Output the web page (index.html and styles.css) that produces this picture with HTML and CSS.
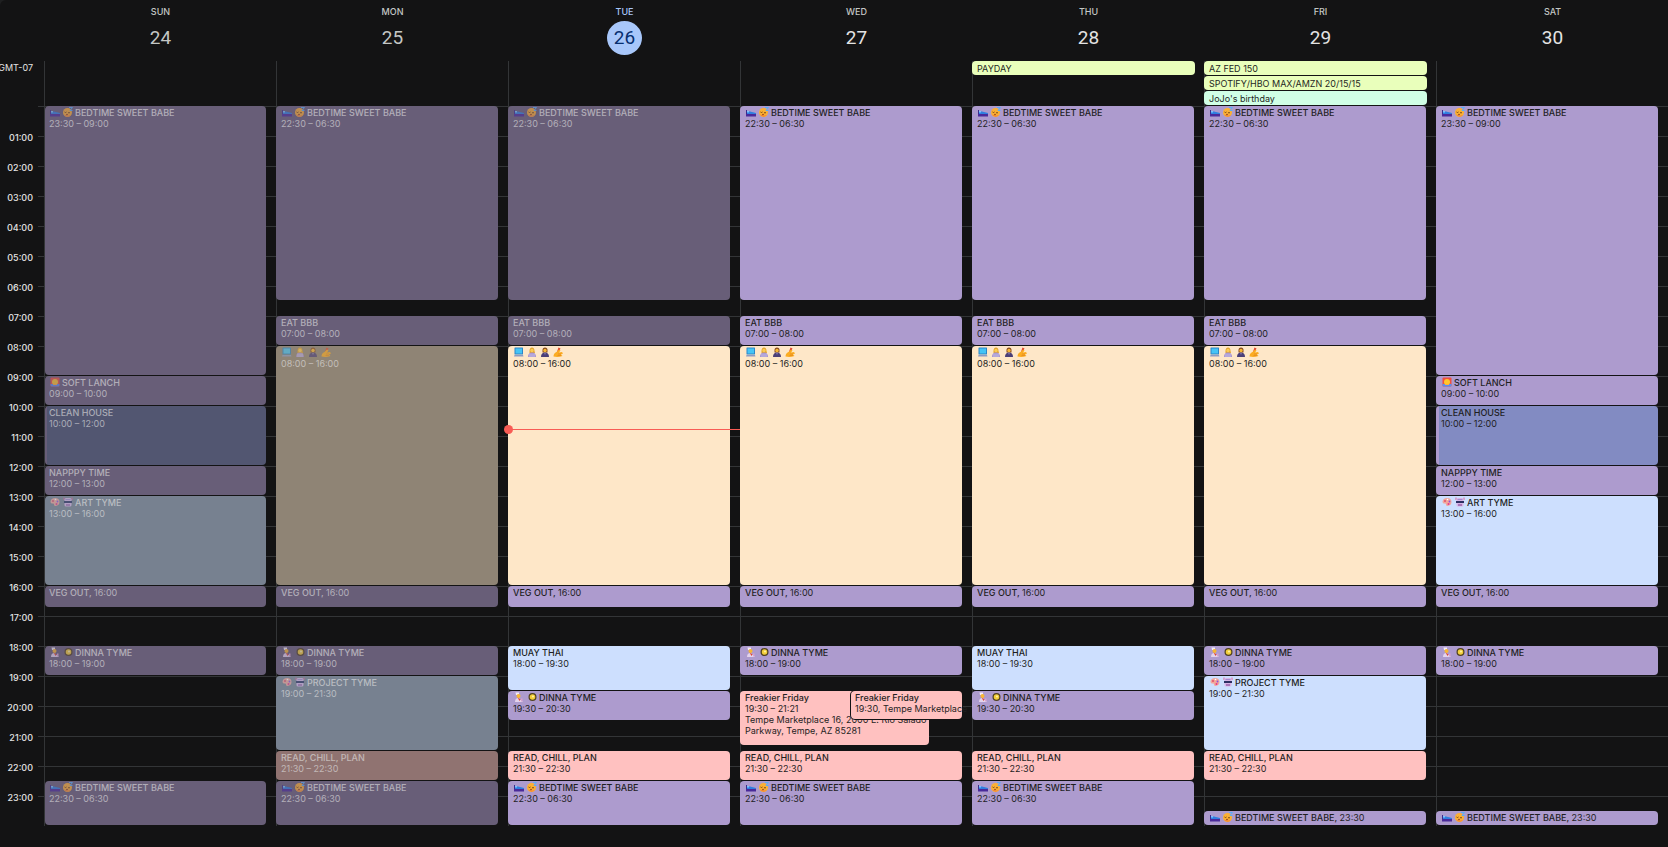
FILE: index.html
```html
<!DOCTYPE html>
<html lang="en">

<head>
    <meta charset="utf-8">
    <title>Week of 24</title>
    <link rel="stylesheet" href="styles.css">
</head>

<body>
    <svg class="sprite" aria-hidden="true">
        <symbol id="bed" viewBox="0 0 20 20">
            <path d="M0 6h2v8h-2z" fill="#3a2d8c" />
            <path d="M2 9h6l12 3v3H2z" fill="#2f7fe0" />
            <path d="M2 8h4v3H2z" fill="#7cc4ff" />
            <path d="M0 14h20v5H0z" fill="#4a2a9a" />
        </symbol>
        <symbol id="sleep" viewBox="0 0 20 20">
            <circle cx="9" cy="11" r="9" fill="#fbb034" />
            <path d="M2 15a9 9 0 0 0 14 1q-7 3-14-1z" fill="#f0703a" />
            <path d="M3 10q2 2 4 0M10 11q2 2 4 0" fill="none" stroke="#5b3212" stroke-width="1.6" />
            <circle cx="8" cy="15" r="1.6" fill="#8c3a1a" />
            <path d="M12 1h7l-5 6h5" fill="none" stroke="#5aaef5" stroke-width="2" />
        </symbol>
        <symbol id="laptop" viewBox="0 0 20 20">
            <rect x="1" y="1" width="17" height="14" rx="1" fill="#2c86c9" />
            <rect x="3" y="3" width="13" height="10" fill="#45c4f5" />
            <path d="M1 16h17l1 3H0z" fill="#8d9cc4" />
        </symbol>
        <symbol id="coder" viewBox="0 0 20 20">
            <path d="M5 8q0-7 5-7t5 7l1 4H5z" fill="#e3a52c" />
            <circle cx="10" cy="7" r="3.4" fill="#fbcb55" />
            <path d="M2 20q0-9 8-9t8 9z" fill="#a58fd0" />
            <rect x="4" y="13" width="12" height="7" fill="#b5a8da" />
        </symbol>
        <symbol id="office" viewBox="0 0 20 20">
            <path d="M5 11V6q0-5 5-5t5 5v5z" fill="#8a4b20" />
            <circle cx="10" cy="7" r="3.4" fill="#f7b733" />
            <path d="M2 20q0-9 8-9t8 9z" fill="#4b3f78" />
            <path d="M9 12h2l-1 4z" fill="#b9aee0" />
        </symbol>
        <symbol id="write" viewBox="0 0 20 20">
            <path d="M11 1l4 2-5 9-4 3z" fill="#e2452f" />
            <path d="M1 19q0-7 6-9l5-5 3 2-3 4 6-1 2 3-4 2 3 3q-9 3-18 1z" fill="#fbac22" />
            <path d="M10 14h6M9 17h7" stroke="#d9781d" />
        </symbol>
        <symbol id="sunset" viewBox="0 0 20 20">
            <rect x="1" y="1" width="18" height="18" rx="2" fill="#f0503f" />
            <circle cx="10" cy="10" r="6" fill="#ffc72e" />
            <path d="M1 14h18v3q0 2-2 2H3q-2 0-2-2z" fill="#5b8def" />
            <path d="M6 14h8v2H6z" fill="#ffb13c" />
        </symbol>
        <symbol id="palette" viewBox="0 0 20 20">
            <path d="M1 9q1-7 9-7 9 0 9 8 0 7-8 8-3 0-3-3t-3-2q-4 1-4-4z" fill="#f3a69a" />
            <circle cx="6" cy="8" r="2" fill="#e0506a" />
            <circle cx="11" cy="5" r="1.6" fill="#fff" />
            <circle cx="15" cy="9" r="1.8" fill="#8b4fe0" />
            <circle cx="13" cy="14" r="2" fill="#e5388c" />
        </symbol>
        <symbol id="robot" viewBox="0 0 20 20">
            <path d="M1 1h2v5H1zM17 1h2v5h-2z" fill="#e0629a" />
            <rect x="3" y="2" width="14" height="17" rx="3" fill="#d8b5e6" />
            <path d="M2 8h16v4H2z" fill="#2c2f63" />
            <path d="M6 15h8v2H6z" fill="#7d3b8f" />
            <path d="M5 4h10v1H5z" fill="#6f5fb8" />
        </symbol>
        <symbol id="chef" viewBox="0 0 20 20">
            <path d="M3 1h7v5H4z" fill="#f4eef8" />
            <circle cx="9" cy="8" r="4" fill="#f7b733" />
            <path d="M2 20q0-8 7-8l9 8z" fill="#e3d3ec" />
            <path d="M7 11l6 4-2 3z" fill="#e2452f" />
            <path d="M14 13h3v6h-3z" fill="#d6a3d0" />
        </symbol>
        <symbol id="pan" viewBox="0 0 20 20">
            <circle cx="11" cy="10" r="8" fill="#51421f" />
            <circle cx="11" cy="10" r="5.5" fill="#f3cf3a" />
            <circle cx="12" cy="9" r="2" fill="#fff2a8" />
        </symbol>
    </svg>

    <main class="calendar">
        <header class="week-head">
            <div class="gutter"></div>
            <div class="day-head past"><span>SUN</span><h2>24</h2></div>
            <div class="day-head past"><span>MON</span><h2>25</h2></div>
            <div class="day-head today"><span>TUE</span><h2>26</h2></div>
            <div class="day-head"><span>WED</span><h2>27</h2></div>
            <div class="day-head"><span>THU</span><h2>28</h2></div>
            <div class="day-head"><span>FRI</span><h2>29</h2></div>
            <div class="day-head"><span>SAT</span><h2>30</h2></div>
        </header>

        <section class="all-day">
            <div class="gutter zone">GMT-07</div>
            <div class="day"></div>
            <div class="day"></div>
            <div class="day"></div>
            <div class="day"></div>
            <div class="day">
                <button class="chip lime">PAYDAY</button>
            </div>
            <div class="day">
                <button class="chip lime">AZ FED 150</button>
                <button class="chip lime">SPOTIFY/HBO MAX/AMZN 20/15/15</button>
                <button class="chip mint">JoJo's birthday</button>
            </div>
            <div class="day"></div>
        </section>

        <!-- one grid row is two minutes -->
        <section class="hours">
            <div class="gutter times">
                <span></span>
                <span>01:00</span>
                <span>02:00</span>
                <span>03:00</span>
                <span>04:00</span>
                <span>05:00</span>
                <span>06:00</span>
                <span>07:00</span>
                <span>08:00</span>
                <span>09:00</span>
                <span>10:00</span>
                <span>11:00</span>
                <span>12:00</span>
                <span>13:00</span>
                <span>14:00</span>
                <span>15:00</span>
                <span>16:00</span>
                <span>17:00</span>
                <span>18:00</span>
                <span>19:00</span>
                <span>20:00</span>
                <span>21:00</span>
                <span>22:00</span>
                <span>23:00</span>
            </div>

            <div class="day slots">
                <button class="event purple past" style="grid-row: 1 / 271"><b><svg><use href="#bed" /></svg><svg><use href="#sleep" /></svg>BEDTIME SWEET BABE</b><span>23:30 – 09:00</span></button>
                <button class="event purple past" style="grid-row: 271 / 301"><b><svg><use href="#sunset" /></svg>SOFT LANCH</b><span>09:00 – 10:00</span></button>
                <button class="event indigo past" style="grid-row: 301 / 361"><b>CLEAN HOUSE</b><span>10:00 – 12:00</span></button>
                <button class="event purple past" style="grid-row: 361 / 391"><b>NAPPPY TIME</b><span>12:00 – 13:00</span></button>
                <button class="event blue past" style="grid-row: 391 / 481"><b><svg><use href="#palette" /></svg><svg><use href="#robot" /></svg>ART TYME</b><span>13:00 – 16:00</span></button>
                <button class="event purple past" style="grid-row: 481 / 503"><b>VEG OUT, <i>16:00</i></b></button>
                <button class="event purple past" style="grid-row: 541 / 571"><b><svg><use href="#chef" /></svg><svg><use href="#pan" /></svg>DINNA TYME</b><span>18:00 – 19:00</span></button>
                <button class="event purple past" style="grid-row: 676 / 721"><b><svg><use href="#bed" /></svg><svg><use href="#sleep" /></svg>BEDTIME SWEET BABE</b><span>22:30 – 06:30</span></button>
            </div>

            <div class="day slots">
                <button class="event purple past" style="grid-row: 1 / 196"><b><svg><use href="#bed" /></svg><svg><use href="#sleep" /></svg>BEDTIME SWEET BABE</b><span>22:30 – 06:30</span></button>
                <button class="event purple past" style="grid-row: 211 / 241"><b>EAT BBB</b><span>07:00 – 08:00</span></button>
                <button class="event cream past" style="grid-row: 241 / 481"><b><svg><use href="#laptop" /></svg><svg><use href="#coder" /></svg><svg><use href="#office" /></svg><svg><use href="#write" /></svg></b><span>08:00 – 16:00</span></button>
                <button class="event purple past" style="grid-row: 481 / 503"><b>VEG OUT, <i>16:00</i></b></button>
                <button class="event purple past" style="grid-row: 541 / 571"><b><svg><use href="#chef" /></svg><svg><use href="#pan" /></svg>DINNA TYME</b><span>18:00 – 19:00</span></button>
                <button class="event blue past" style="grid-row: 571 / 646"><b><svg><use href="#palette" /></svg><svg><use href="#robot" /></svg>PROJECT TYME</b><span>19:00 – 21:30</span></button>
                <button class="event pink past" style="grid-row: 646 / 676"><b>READ, CHILL, PLAN</b><span>21:30 – 22:30</span></button>
                <button class="event purple past" style="grid-row: 676 / 721"><b><svg><use href="#bed" /></svg><svg><use href="#sleep" /></svg>BEDTIME SWEET BABE</b><span>22:30 – 06:30</span></button>
            </div>

            <div class="day slots">
                <button class="event purple past" style="grid-row: 1 / 196"><b><svg><use href="#bed" /></svg><svg><use href="#sleep" /></svg>BEDTIME SWEET BABE</b><span>22:30 – 06:30</span></button>
                <button class="event purple past" style="grid-row: 211 / 241"><b>EAT BBB</b><span>07:00 – 08:00</span></button>
                <button class="event cream" style="grid-row: 241 / 481"><b><svg><use href="#laptop" /></svg><svg><use href="#coder" /></svg><svg><use href="#office" /></svg><svg><use href="#write" /></svg></b><span>08:00 – 16:00</span></button>
                <button class="event purple" style="grid-row: 481 / 503"><b>VEG OUT, <i>16:00</i></b></button>
                <button class="event blue" style="grid-row: 541 / 586"><b>MUAY THAI</b><span>18:00 – 19:30</span></button>
                <button class="event purple" style="grid-row: 586 / 616"><b><svg><use href="#chef" /></svg><svg><use href="#pan" /></svg>DINNA TYME</b><span>19:30 – 20:30</span></button>
                <button class="event pink" style="grid-row: 646 / 676"><b>READ, CHILL, PLAN</b><span>21:30 – 22:30</span></button>
                <button class="event purple" style="grid-row: 676 / 721"><b><svg><use href="#bed" /></svg><svg><use href="#sleep" /></svg>BEDTIME SWEET BABE</b><span>22:30 – 06:30</span></button>
                <div class="now" style="grid-row: 324"></div>
            </div>

            <div class="day slots">
                <button class="event purple" style="grid-row: 1 / 196"><b><svg><use href="#bed" /></svg><svg><use href="#sleep" /></svg>BEDTIME SWEET BABE</b><span>22:30 – 06:30</span></button>
                <button class="event purple" style="grid-row: 211 / 241"><b>EAT BBB</b><span>07:00 – 08:00</span></button>
                <button class="event cream" style="grid-row: 241 / 481"><b><svg><use href="#laptop" /></svg><svg><use href="#coder" /></svg><svg><use href="#office" /></svg><svg><use href="#write" /></svg></b><span>08:00 – 16:00</span></button>
                <button class="event purple" style="grid-row: 481 / 503"><b>VEG OUT, <i>16:00</i></b></button>
                <button class="event purple" style="grid-row: 541 / 571"><b><svg><use href="#chef" /></svg><svg><use href="#pan" /></svg>DINNA TYME</b><span>18:00 – 19:00</span></button>
                <button class="event pink under" style="grid-row: 586 / 641"><b>Freakier Friday</b><span>19:30 – 21:21</span><span>Tempe Marketplace 16, 2000 E. Rio Salado Parkway, Tempe, AZ 85281</span></button>
                <button class="event pink over" style="grid-row: 586 / 615"><b>Freakier Friday</b><span>19:30, Tempe Marketplace</span></button>
                <button class="event pink" style="grid-row: 646 / 676"><b>READ, CHILL, PLAN</b><span>21:30 – 22:30</span></button>
                <button class="event purple" style="grid-row: 676 / 721"><b><svg><use href="#bed" /></svg><svg><use href="#sleep" /></svg>BEDTIME SWEET BABE</b><span>22:30 – 06:30</span></button>
            </div>

            <div class="day slots">
                <button class="event purple" style="grid-row: 1 / 196"><b><svg><use href="#bed" /></svg><svg><use href="#sleep" /></svg>BEDTIME SWEET BABE</b><span>22:30 – 06:30</span></button>
                <button class="event purple" style="grid-row: 211 / 241"><b>EAT BBB</b><span>07:00 – 08:00</span></button>
                <button class="event cream" style="grid-row: 241 / 481"><b><svg><use href="#laptop" /></svg><svg><use href="#coder" /></svg><svg><use href="#office" /></svg><svg><use href="#write" /></svg></b><span>08:00 – 16:00</span></button>
                <button class="event purple" style="grid-row: 481 / 503"><b>VEG OUT, <i>16:00</i></b></button>
                <button class="event blue" style="grid-row: 541 / 586"><b>MUAY THAI</b><span>18:00 – 19:30</span></button>
                <button class="event purple" style="grid-row: 586 / 616"><b><svg><use href="#chef" /></svg><svg><use href="#pan" /></svg>DINNA TYME</b><span>19:30 – 20:30</span></button>
                <button class="event pink" style="grid-row: 646 / 676"><b>READ, CHILL, PLAN</b><span>21:30 – 22:30</span></button>
                <button class="event purple" style="grid-row: 676 / 721"><b><svg><use href="#bed" /></svg><svg><use href="#sleep" /></svg>BEDTIME SWEET BABE</b><span>22:30 – 06:30</span></button>
            </div>

            <div class="day slots">
                <button class="event purple" style="grid-row: 1 / 196"><b><svg><use href="#bed" /></svg><svg><use href="#sleep" /></svg>BEDTIME SWEET BABE</b><span>22:30 – 06:30</span></button>
                <button class="event purple" style="grid-row: 211 / 241"><b>EAT BBB</b><span>07:00 – 08:00</span></button>
                <button class="event cream" style="grid-row: 241 / 481"><b><svg><use href="#laptop" /></svg><svg><use href="#coder" /></svg><svg><use href="#office" /></svg><svg><use href="#write" /></svg></b><span>08:00 – 16:00</span></button>
                <button class="event purple" style="grid-row: 481 / 503"><b>VEG OUT, <i>16:00</i></b></button>
                <button class="event purple" style="grid-row: 541 / 571"><b><svg><use href="#chef" /></svg><svg><use href="#pan" /></svg>DINNA TYME</b><span>18:00 – 19:00</span></button>
                <button class="event blue" style="grid-row: 571 / 646"><b><svg><use href="#palette" /></svg><svg><use href="#robot" /></svg>PROJECT TYME</b><span>19:00 – 21:30</span></button>
                <button class="event pink" style="grid-row: 646 / 676"><b>READ, CHILL, PLAN</b><span>21:30 – 22:30</span></button>
                <button class="event purple" style="grid-row: 706 / 721"><b><svg><use href="#bed" /></svg><svg><use href="#sleep" /></svg>BEDTIME SWEET BABE, <i>23:30</i></b></button>
            </div>

            <div class="day slots">
                <button class="event purple" style="grid-row: 1 / 271"><b><svg><use href="#bed" /></svg><svg><use href="#sleep" /></svg>BEDTIME SWEET BABE</b><span>23:30 – 09:00</span></button>
                <button class="event purple" style="grid-row: 271 / 301"><b><svg><use href="#sunset" /></svg>SOFT LANCH</b><span>09:00 – 10:00</span></button>
                <button class="event indigo" style="grid-row: 301 / 361"><b>CLEAN HOUSE</b><span>10:00 – 12:00</span></button>
                <button class="event purple" style="grid-row: 361 / 391"><b>NAPPPY TIME</b><span>12:00 – 13:00</span></button>
                <button class="event blue" style="grid-row: 391 / 481"><b><svg><use href="#palette" /></svg><svg><use href="#robot" /></svg>ART TYME</b><span>13:00 – 16:00</span></button>
                <button class="event purple" style="grid-row: 481 / 503"><b>VEG OUT, <i>16:00</i></b></button>
                <button class="event purple" style="grid-row: 541 / 571"><b><svg><use href="#chef" /></svg><svg><use href="#pan" /></svg>DINNA TYME</b><span>18:00 – 19:00</span></button>
                <button class="event purple" style="grid-row: 706 / 721"><b><svg><use href="#bed" /></svg><svg><use href="#sleep" /></svg>BEDTIME SWEET BABE, <i>23:30</i></b></button>
            </div>
        </section>
    </main>
</body>

</html>
```
FILE: styles.css
```css
* {
    box-sizing: border-box;
}

body {
    margin: 0;
    background: #1e1f20;
    color: #e3e3e3;
    font-family: Inter, sans-serif;
    font-size: 9px;
    line-height: 11px;
}

button {
    border: 0;
    margin: 0;
    color: inherit;
    font: inherit;
    text-align: left;
    cursor: pointer;
}

.sprite {
    display: none;
}

.calendar {
    min-height: 100vh;
    background: #131314;
    border-radius: 6px 0 0 0;
}

.week-head,
.all-day,
.hours {
    display: grid;
    grid-template-columns: 44px repeat(7, minmax(0, 1fr));
}

.gutter {
    padding-right: 11px;
    text-align: right;
    white-space: nowrap;
    font-weight: 500;
}

/* day names */

.week-head {
    height: 61px;
}

.day-head {
    display: flex;
    flex-direction: column;
    align-items: center;
    gap: 4px;
    padding: 6px 0 0 1px;
    color: #e3e3e3;
}

.day-head span {
    color: #c4c7c5;
    font-weight: 500;
}

.day-head h2 {
    width: 35px;
    margin: 0;
    border-radius: 50%;
    font: 19px/34px Roboto, sans-serif;
    text-align: center;
}

.day-head.past {
    color: #c4c7c5;
}

.day-head.today span {
    color: #a8c7fa;
}

.day-head.today h2 {
    background: #a8c7fa;
    color: #062e6f;
}

/* all day row */

.all-day {
    min-height: 45px;
}

.day {
    padding-right: 10px;
    background: linear-gradient(#333537, #333537) 0 0 / 1px 100% no-repeat;
}

.all-day .day {
    display: flex;
    flex-direction: column;
    gap: 1px;
    padding-right: 9px;
}

.zone {
    display: flex;
    justify-content: flex-end;
    padding-top: 1px;
    font-weight: 400;
}

.chip {
    height: 14px;
    padding: 0 5px;
    border-radius: 4px;
    color: #1f1f1f;
}

.lime {
    background: #e9ffbb;
}

.mint {
    background: #d0ffe6;
}

/* hour grid */

.hours {
    background: linear-gradient(#333537 1px, transparent 1px) 38px 0 / 100% 30px repeat-y;
}

.times {
    display: grid;
    grid-auto-rows: 30px;
    margin-top: -4px;
    margin-bottom: 4px;
}

.slots {
    display: grid;
    grid-template-columns: 100%;
    grid-template-rows: repeat(720, 1px);
}

.event {
    display: flex;
    flex-direction: column;
    justify-content: flex-start;
    grid-column: 1;
    margin-bottom: 1px;
    padding: 1px 0 0 5px;
    border-radius: 4px;
    color: #1f1f1f;
    overflow: hidden;
}

.slots:nth-child(2) .event {
    margin-left: 1px;
    padding-left: 4px;
}

.event b {
    font-weight: 500;
    white-space: nowrap;
}

.event i {
    font-style: normal;
    font-weight: 400;
}

.event svg {
    width: 10px;
    height: 10px;
    margin: 0 2px 0 1px;
    vertical-align: top;
}

.event.past {
    color: rgba(227, 227, 227, .62);
}

.event.past svg {
    opacity: .6;
}

.purple {
    background: #ad9bce;
}

.purple.past {
    background: #685e78;
}

.cream {
    background: #fee7c8;
}

.cream.past {
    background: #8f8475;
}

.blue {
    background: #cddffe;
}

.blue.past {
    background: #778190;
}

.pink {
    background: #ffc1c0;
}

.pink.past {
    background: #907371;
}

.indigo {
    background: linear-gradient(90deg, #ad9bce 3px, #828bc2 3px);
}

.indigo.past {
    background: linear-gradient(90deg, #685e78 2px, #525671 2px);
}

.under {
    width: 85%;
}

.over {
    margin-left: 50%;
    padding-left: 4px;
    box-shadow: 0 0 0 1px #131314;
    white-space: nowrap;
    overflow: visible;
}

/* current time */

.now {
    position: relative;
    grid-column: 1;
    height: 1px;
    margin-right: -10px;
    background: #f85c55;
}

.now::before {
    content: "";
    position: absolute;
    top: -4px;
    left: -4px;
    width: 9px;
    height: 9px;
    border-radius: 50%;
    background: #f85c55;
}
```
